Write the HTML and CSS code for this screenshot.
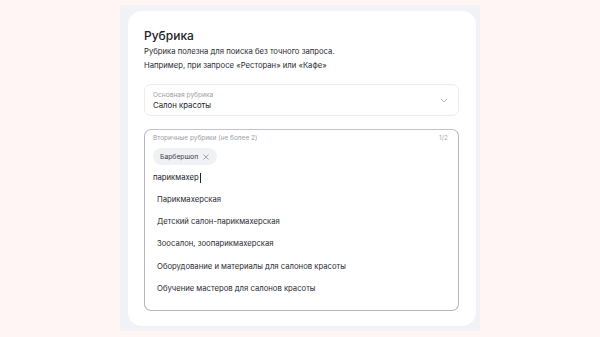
FILE: index.html
```html
<!DOCTYPE html>
<html lang="ru">
<head>
<meta charset="utf-8">
<link rel="stylesheet" href="styles.css">
</head>
<body>
<div class="panel">
  <div class="card">
    <h1 class="title">Рубрика</h1>
    <p class="desc">Рубрика полезна для поиска без точного запроса.<br>Например, при запросе «Ресторан» или «Кафе»</p>
    <div class="field main">
      <div class="field-text">
        <div class="label">Основная рубрика</div>
        <div class="value">Салон красоты</div>
      </div>
      <svg class="chev" width="8" height="5" viewBox="0 0 8 5"><path d="M1 1l3 3 3-3" fill="none" stroke="#b5b7bf" stroke-width="1"/></svg>
    </div>
    <div class="field multi">
      <div class="multi-head">
        <span class="label">Вторичные рубрики (не более 2)</span>
        <span class="count">1/2</span>
      </div>
      <div class="chips">
        <span class="chip">Барбершоп <svg width="6" height="6" viewBox="0 0 6 6"><path d="M0.5 0.5l5 5M5.5 0.5l-5 5" stroke="#9a9ca6" stroke-width="0.9"/></svg></span>
      </div>
      <div class="input">парикмахер<span class="caret"></span></div>
      <ul class="options">
        <li>Парикмахерская</li>
        <li>Детский салон-парикмахерская</li>
        <li>Зоосалон, зоопарикмахерская</li>
        <li>Оборудование и материалы для салонов красоты</li>
        <li>Обучение мастеров для салонов красоты</li>
      </ul>
    </div>
  </div>
</div>
</body>
</html>
```
FILE: styles.css
```css
* { box-sizing: border-box; }
html, body { margin: 0; padding: 0; }
body {
  background: #fff5f5;
  font-family: Inter, "Noto Sans", sans-serif;
  color: #21222a;
  width: 600px;
  height: 337px;
  overflow: hidden;
}
.panel {
  margin: 5px 0 0 120px;
  width: 360px;
  height: 326px;
  background: #f1f2f6;
  padding: 6px 4px 5px 8px;
}
.card {
  background: #fff;
  border-radius: 14px;
  height: 100%;
  padding: 17px 17px 0 16px;
}
.title {
  margin: 0;
  font-size: 12px;
  font-weight: 500;
  line-height: 16px;
}
.desc {
  margin: 1px 0 0;
  font-size: 7.7px;
  line-height: 14px;
  color: #2a2b33;
}
.field {
  border: 1px solid #ececf0;
  border-radius: 7px;
}
.main {
  margin-top: 11px;
  height: 32px;
  display: flex;
  align-items: center;
  justify-content: space-between;
  padding: 0 10px 0 8px;
}
.field-text { margin-top: 1px; }
.label {
  font-size: 6.6px;
  line-height: 10px;
  color: #9b9da6;
}
.value {
  font-size: 7.8px;
  line-height: 11px;
}
.chev { margin-top: 1px; }
.multi {
  margin-top: 13px;
  height: 182px;
  border-color: #c3c0dc #b4b5bf #b4b5bf #b4b5bf;
  padding: 2px 8px 0 8px;
}
.multi-head {
  display: flex;
  justify-content: space-between;
  align-items: center;
  height: 12px;
}
.multi-head .label { font-size: 6.5px; }
.count {
  font-size: 6.5px;
  color: #a9abb3;
  margin-right: 2px;
}
.chips {
  display: flex;
  margin-top: 4px;
}
.chip {
  display: inline-flex;
  align-items: center;
  gap: 5px;
  height: 17px;
  padding: 0 8px 0 7px;
  background: #f0f1f4;
  border-radius: 9px;
  font-size: 6.8px;
  color: #3a3b44;
}
.input {
  margin-top: 7px;
  font-size: 7.7px;
  line-height: 12px;
  display: flex;
  align-items: center;
}
.caret {
  display: inline-block;
  width: 1px;
  height: 10px;
  background: #21222a;
  margin-left: 1px;
}
.options {
  list-style: none;
  margin: 4px 0 0;
  padding: 0 0 0 4px;
}
.options li {
  height: 22.3px;
  display: flex;
  align-items: center;
  font-size: 7.7px;
  color: #2a2b33;
}
```
